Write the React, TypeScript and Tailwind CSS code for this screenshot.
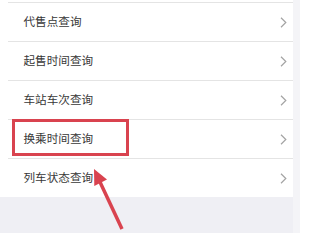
const items = ['代售点查询', '起售时间查询', '车站车次查询', '换乘时间查询', '列车状态查询']

function Chevron() {
  return (
    <svg width="7" height="11" viewBox="0 0 7 11" className="flex-shrink-0">
      <polyline points="1,0.8 5.8,5.5 1,10.2" fill="none" stroke="#a3a3a3" strokeWidth="1.2" />
    </svg>
  )
}

export default function App() {
  return (
    <div
      className="relative w-[300px] h-[233px] overflow-hidden flex bg-[#efeff4] text-[#383838]"
      style={{ fontFamily: '"Noto Sans CJK SC", "Noto Sans", sans-serif' }}
    >
      <div className="w-[293px] flex flex-col">
        <div className="bg-white pt-[2px]">
          {items.map(label => (
            <div
              key={label}
              className="ml-2 h-[39px] flex items-center justify-between border-t border-[#e4e4e4] pl-[15.5px] pr-[6px]"
            >
              <span className="text-[11.6px] leading-none">{label}</span>
              <Chevron />
            </div>
          ))}
        </div>
      </div>
      <div className="flex-1 bg-[#f4f4f7]" />

      {/* annotation */}
      <div className="absolute left-[12px] top-[119px] w-[117px] h-[37px] border-[3px] border-[#d9434f]" />
      <svg className="absolute inset-0" width="300" height="233" viewBox="0 0 300 233">
        <line x1="122" y1="229" x2="100" y2="182" stroke="#d9434f" strokeWidth="3.5" />
        <polygon points="94,169 107,179.6 94.3,186" fill="#d9434f" />
      </svg>
    </div>
  )
}
